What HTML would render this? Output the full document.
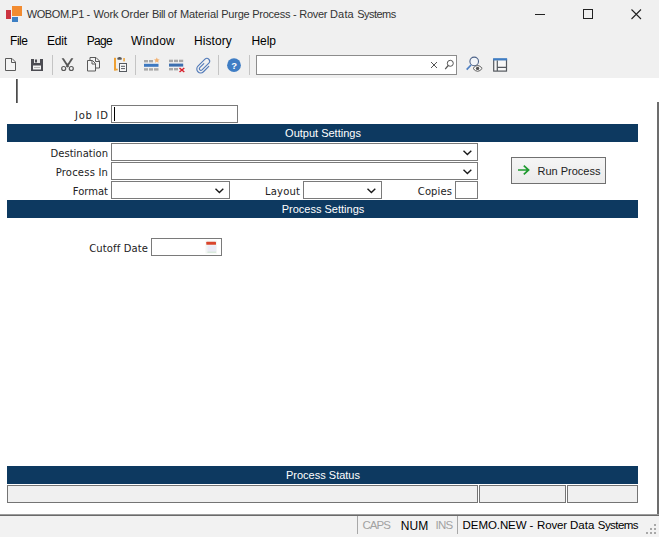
<!DOCTYPE html>
<html lang="en">
<head>
<meta charset="utf-8">
<title>WOBOM.P1 - Work Order Bill of Material Purge Process - Rover Data Systems</title>
<style>
html,body{margin:0;padding:0;}
body{width:659px;height:537px;overflow:hidden;background:#f0f0f0;position:relative;font-family:"Liberation Sans",sans-serif;}
#win{position:absolute;left:0;top:0;width:659px;height:537px;background:#f0f0f0;overflow:hidden;}
.abs{position:absolute;}
.t{position:absolute;white-space:nowrap;line-height:1;}
.ui{font-family:"Liberation Sans",sans-serif;font-size:12px;color:#000;}
.lbl{font-family:"DejaVu Sans","Liberation Sans",sans-serif;font-size:10px;color:#222;text-align:right;}
.bar{position:absolute;left:7px;width:630px;padding-left:1px;height:18px;background:#0d3960;color:#fff;font-family:"Liberation Sans",sans-serif;font-size:11px;text-align:center;line-height:18px;}
.inp{position:absolute;box-sizing:border-box;border:1px solid #7a7a7a;background:#fff;}
.sep{position:absolute;width:1px;background:#c4c4c4;}
svg{position:absolute;overflow:visible;}
</style>
</head>
<body>
<div id="win">

<!-- title bar -->
<div class="abs" style="left:6px;top:10px;width:5px;height:8.500px;background:#cc3340;"></div>
<div class="abs" style="left:12px;top:6px;width:10px;height:10px;background:#f28b30;"></div>
<div class="abs" style="left:12px;top:17px;width:6px;height:5px;background:#3d7fc4;"></div>
<div class="t ui" id="title" style="left:26.700px;top:8.800px;color:#333;font-size:11px;"><span style="letter-spacing:-0.407px">WOBOM.P1 </span><span style="letter-spacing:0.133px">- </span><span style="letter-spacing:-0.226px">Work </span><span style="letter-spacing:-0.031px">Order </span><span style="letter-spacing:-0.4px">Bill </span><span style="letter-spacing:0.02px">of </span><span style="letter-spacing:-0.11px">Material </span><span style="letter-spacing:-0.237px">Purge </span><span style="letter-spacing:-0.262px">Process </span><span style="letter-spacing:-0.217px">- </span><span style="letter-spacing:-0.268px">Rover </span><span style="letter-spacing:0.161px">Data </span><span style="letter-spacing:-0.515px">Systems</span></div>
<svg style="left:530px;top:4px;" width="120" height="20" viewBox="530 4 120 20">
  <path d="M535 14.5h10" stroke="#222" stroke-width="1" fill="none"/>
  <rect x="583.5" y="9.500" width="9" height="9" stroke="#222" stroke-width="1" fill="none"/>
  <path d="M631.500 9.500l9.500 9.500M641 9.500l-9.500 9.500" stroke="#222" stroke-width="1.100" fill="none"/>
</svg>

<!-- menu -->
<div class="t ui m" style="left:10px;top:35px;letter-spacing:-0.448px;">File</div>
<div class="t ui m" style="left:47px;top:35px;letter-spacing:-0.229px;">Edit</div>
<div class="t ui m" style="left:86.800px;top:35px;letter-spacing:-0.700px;">Page</div>
<div class="t ui m" style="left:131px;top:35px;letter-spacing:0.222px;">Window</div>
<div class="t ui m" style="left:194px;top:35px;letter-spacing:0.076px;">History</div>
<div class="t ui m" style="left:251.5px;top:35px;letter-spacing:-0.096px;">Help</div>

<!-- toolbar -->
<div class="sep" style="left:52px;top:55px;height:20px;"></div>
<div class="sep" style="left:135px;top:55px;height:20px;"></div>
<div class="sep" style="left:218px;top:55px;height:20px;"></div>
<div class="sep" style="left:249px;top:55px;height:20px;"></div>
<div class="inp" style="left:256px;top:55px;width:201px;height:20px;border-color:#8c8c8c;"></div>


<!-- toolbar icons -->
<svg style="left:0;top:52px;" width="659" height="26" viewBox="0 52 659 26">
  <!-- new -->
  <path d="M5.500 58.500h6.500l3.500 3.500v8.500h-10z" fill="#f4f4f4" stroke="#5a5a5a" stroke-width="1"/>
  <path d="M11.500 58.500v4h4" fill="none" stroke="#5a5a5a" stroke-width="1"/>
  <!-- save -->
  <rect x="31" y="59" width="12" height="12" fill="#4c4c52"/>
  <rect x="34" y="59" width="6" height="4" fill="#e8e8e8"/>
  <rect x="35" y="59.500" width="2" height="3" fill="#4c4c52"/>
  <rect x="33" y="65.500" width="8" height="4" fill="#f4f4f4"/>
  <rect x="34" y="67" width="6" height="1" fill="#b8b8b8"/>
  <!-- cut -->
  <path d="M61.600 58.300h2.200l5.300 8.200l-1.500 1z" fill="#585858"/>
  <path d="M73.400 58.300h-2.200l-5.300 8.200l1.500 1z" fill="#585858"/>
  <path d="M65 62.500l2.500 3.800l2.500-3.800l-2.500 1.200z" fill="#585858"/>
  <circle cx="63.700" cy="68.500" r="2" fill="none" stroke="#585858" stroke-width="1.200"/>
  <circle cx="71.300" cy="68.500" r="2" fill="none" stroke="#585858" stroke-width="1.200"/>
  <!-- copy -->
  <path d="M90 57.500h6l3.500 3.500v7h-9.500z" fill="#f4f4f4" stroke="#5a5a5a" stroke-width="1"/>
  <path d="M95.500 57.500v4h4" fill="none" stroke="#5a5a5a" stroke-width="1"/>
  <path d="M87.500 60.500h5l3 3v7.500h-8z" fill="#f4f4f4" stroke="#5a5a5a" stroke-width="1"/>
  <path d="M92 60.500v3.500h3.500" fill="none" stroke="#5a5a5a" stroke-width="1"/>
  <!-- paste -->
  <rect x="114" y="57.800" width="2" height="12.600" fill="#eea033"/>
  <rect x="114" y="68.700" width="3.700" height="1.700" fill="#eea033"/>
  <rect x="123.300" y="58" width="1.500" height="3.400" fill="#eea033"/>
  <rect x="117.300" y="57.600" width="4.500" height="2.100" rx="0.800" fill="#5a5a5a"/>
  <rect x="118.500" y="56.900" width="2.200" height="1.500" rx="0.700" fill="#5a5a5a"/>
  <rect x="119.500" y="63.500" width="7" height="8" fill="#f7f7f7" stroke="#55595f" stroke-width="1"/>
  <path d="M121 66.300h4M121 68.600h4" stroke="#55595f" stroke-width="1" fill="none"/>
  <!-- insert row -->
  <rect x="144" y="60" width="4" height="2.400" fill="#a8a8a8"/>
  <rect x="149" y="60" width="4" height="2.400" fill="#a8a8a8"/>
  <path d="M156.800 57.500l0.900 1.700l1.900 0.300l-1.400 1.300l0.400 1.900l-1.800-0.900l-1.800 0.900l0.400-1.900l-1.400-1.300l1.900-0.300z" fill="#f2b272"/>
  <rect x="144" y="63.800" width="14.500" height="3" fill="#3d78c0"/>
  <rect x="144" y="68.200" width="4" height="2.400" fill="#a8a8a8"/>
  <rect x="149" y="68.200" width="4" height="2.400" fill="#a8a8a8"/>
  <rect x="154" y="68.200" width="4.500" height="2.400" fill="#a8a8a8"/>
  <!-- delete row -->
  <rect x="169" y="59.700" width="4" height="2.400" fill="#a8a8a8"/>
  <rect x="174" y="59.700" width="4" height="2.400" fill="#a8a8a8"/>
  <rect x="179" y="59.700" width="4.200" height="2.400" fill="#a8a8a8"/>
  <rect x="169" y="63.600" width="14.200" height="3" fill="#3d6faf"/>
  <rect x="169" y="68" width="4" height="2.400" fill="#a8a8a8"/>
  <rect x="174" y="68" width="4" height="2.400" fill="#a8a8a8"/>
  <path d="M179.500 68l4.800 4M184.300 68l-4.800 4" stroke="#d8202c" stroke-width="1.500" fill="none"/>
  <!-- attach -->
  <path transform="translate(10.500 4.200) scale(0.950)" d="M203.500 62.500l-4.300 4.300a1.700 1.700 0 0 0 2.400 2.400l7.200-7.200a2.900 2.900 0 0 0-4.100-4.100l-7.400 7.400a4.100 4.100 0 0 0 5.800 5.800l5.600-5.600" fill="none" stroke="#5079b8" stroke-width="1.150" stroke-linecap="round"/>
  <!-- help -->
  <circle cx="234" cy="65.200" r="6.900" fill="#3f7dc4"/>
  <text x="234.100" y="68.600" text-anchor="middle" font-family="Liberation Sans, sans-serif" font-weight="bold" font-size="9.500" fill="#fff">?</text>
  <!-- search box icons -->
  <path d="M431 62l6 6M437 62l-6 6" stroke="#555" stroke-width="1" fill="none"/>
  <circle cx="450.300" cy="63.300" r="3" fill="none" stroke="#555" stroke-width="1"/>
  <path d="M448.200 65.500l-3 3.700" stroke="#555" stroke-width="1.200" fill="none"/>
  <!-- find-view -->
  <circle cx="474.200" cy="61.400" r="4.300" fill="#f2f5f9" stroke="#4c6288" stroke-width="1.100"/>
  <path d="M471 65l-4.300 4.600" stroke="#4f80c4" stroke-width="1.700" fill="none"/>
  <path d="M473 68.400q4.600-5.800 9.200 0q-4.600 5.800-9.200 0z" fill="#fafafa" stroke="#5a5a5a" stroke-width="1"/>
  <circle cx="477.600" cy="68.400" r="1.700" fill="#505050"/>
  <!-- layout -->
  <rect x="493.700" y="59.500" width="12.800" height="11.600" fill="#f7f7f7" stroke="#55595f" stroke-width="1.200"/>
  <rect x="493.100" y="58.200" width="14" height="2.200" fill="#3f7dc4"/>
  <path d="M497.300 60.400v10.700M497.300 67.400h9.500" stroke="#55595f" stroke-width="1.200" fill="none"/>
</svg>

<!-- content -->
<div class="abs" id="content" style="left:0;top:78px;width:659px;height:437px;background:#fff;"></div>
<div class="abs" style="left:16px;top:79px;width:1px;height:24px;background:#4c4c4c;"></div><div class="abs" style="left:17px;top:79px;width:1px;height:24px;background:#7c7c7c;"></div>
<div class="abs" style="left:657px;top:102px;width:2px;height:414px;background:#6d6d6d;"></div>
<div class="abs" style="left:0;top:514px;width:659px;height:1px;background:#9c9c9c;"></div><div class="abs" style="left:0;top:515px;width:659px;height:1px;background:#6a6a6a;"></div>
<div class="abs" style="left:0;top:516px;width:659px;height:21px;background:#f2f2f2;"></div>

<div class="t lbl" style="left:0;width:108.7px;top:110.7px;letter-spacing:0.75px;">Job ID</div>
<div class="inp" style="left:111px;top:105px;width:127px;height:18px;"></div>
<div class="abs" style="left:114px;top:107px;width:1px;height:14px;background:#000;"></div>

<div class="bar" style="top:124px;">Output Settings</div>

<div class="t lbl" style="left:0;width:108px;top:148.7px;">Destination</div>
<div class="inp" style="left:111px;top:143px;width:367px;height:18px;"></div>
<div class="t lbl" style="left:0;width:108.2px;top:167.7px;letter-spacing:0.21px;">Process In</div>
<div class="inp" style="left:111px;top:162px;width:367px;height:18px;"></div>
<div class="t lbl" style="left:0;width:108px;top:186.7px;">Format</div>
<div class="inp" style="left:111px;top:181px;width:119px;height:18px;"></div>
<div class="t lbl" style="left:200px;width:100.200px;top:186.700px;letter-spacing:0.200px;">Layout</div>
<div class="inp" style="left:303px;top:181px;width:79px;height:18px;"></div>
<div class="t lbl" style="left:352px;width:100px;top:186.700px;letter-spacing:0.100px;">Copies</div>
<div class="inp" style="left:455px;top:181px;width:23px;height:18px;"></div>

<div class="inp" style="left:511px;top:157px;width:95px;height:27px;background:linear-gradient(#f5f5f5,#ebebeb);border-color:#707070;"></div>
<div class="t" style="left:537.5px;top:165.500px;font-size:11px;color:#222;" id="runp">Run Process</div>

<div class="bar" style="top:200px;">Process Settings</div>

<div class="t lbl" style="left:40px;width:108px;top:243.7px;letter-spacing:0.116px;">Cutoff Date</div>
<div class="inp" style="left:151px;top:238px;width:71px;height:18px;"></div>


<!-- form glyphs -->
<svg style="left:0;top:140px;" width="659" height="120" viewBox="0 140 659 120">
  <path d="M463.500 150.800l3.900 3.700l3.900-3.700" fill="none" stroke="#1a1a1a" stroke-width="1.400"/>
  <path d="M463.500 169.800l3.900 3.700l3.900-3.700" fill="none" stroke="#1a1a1a" stroke-width="1.400"/>
  <path d="M215.500 188.800l3.900 3.700l3.900-3.700" fill="none" stroke="#1a1a1a" stroke-width="1.400"/>
  <path d="M367.500 188.800l3.900 3.700l3.900-3.700" fill="none" stroke="#1a1a1a" stroke-width="1.400"/>
  <path d="M518 170h10M523.800 165.600l4.800 4.400l-4.800 4.400" fill="none" stroke="#1f9a30" stroke-width="1.700" stroke-linejoin="miter"/>
  <rect x="205.500" y="240.500" width="11.500" height="13" fill="#f3f6f4"/>
  <rect x="207.500" y="245.500" width="8.500" height="7" fill="#ebebf6"/>
  <path d="M207.500 252.200h8.500" stroke="#cfe6cf" stroke-width="1" fill="none"/>
  <rect x="206.300" y="241.700" width="9.700" height="3.100" rx="0.600" fill="#d9452c"/>
</svg>

<div class="bar" style="top:466px;">Process Status</div>
<div class="inp" style="left:7px;top:485px;width:471px;height:18px;background:#f0f0f0;border-color:#747474;"></div>
<div class="inp" style="left:479px;top:485px;width:87px;height:18px;background:#f0f0f0;border-color:#747474;"></div>
<div class="inp" style="left:567px;top:485px;width:71px;height:18px;background:#f0f0f0;border-color:#747474;"></div>

<!-- status bar -->
<svg style="left:644px;top:522px;" width="14" height="14" viewBox="644 522 14 14">
  <g fill="#a8a8a8"><rect x="654" y="524" width="2" height="2"/><rect x="650" y="528" width="2" height="2"/><rect x="654" y="528" width="2" height="2"/><rect x="646" y="532" width="2" height="2"/><rect x="650" y="532" width="2" height="2"/><rect x="654" y="532" width="2" height="2"/></g>
</svg>

<div class="sep" style="left:357px;top:516px;height:18px;background:#a8a8a8;"></div>
<div class="sep" style="left:457px;top:516px;height:18px;background:#a8a8a8;"></div>
<div class="t ui" style="left:362.5px;top:520px;color:#a2a2a2;font-size:11.5px;letter-spacing:-0.97px;">CAPS</div>
<div class="t ui" style="left:400.8px;top:520px;">NUM</div>
<div class="t ui" style="left:435.5px;top:520px;color:#a2a2a2;font-size:11.5px;letter-spacing:-0.78px;">INS</div>
<div class="t ui" style="left:462.600px;top:520.300px;font-size:11.500px;" id="demo"><span style="letter-spacing:-0.082px">DEMO.NEW </span><span style="letter-spacing:0.184px">- </span><span style="letter-spacing:-0.146px">Rover </span><span style="letter-spacing:0.06px">Data </span><span style="letter-spacing:-0.566px">Systems</span></div>

</div>
</body>
</html>
